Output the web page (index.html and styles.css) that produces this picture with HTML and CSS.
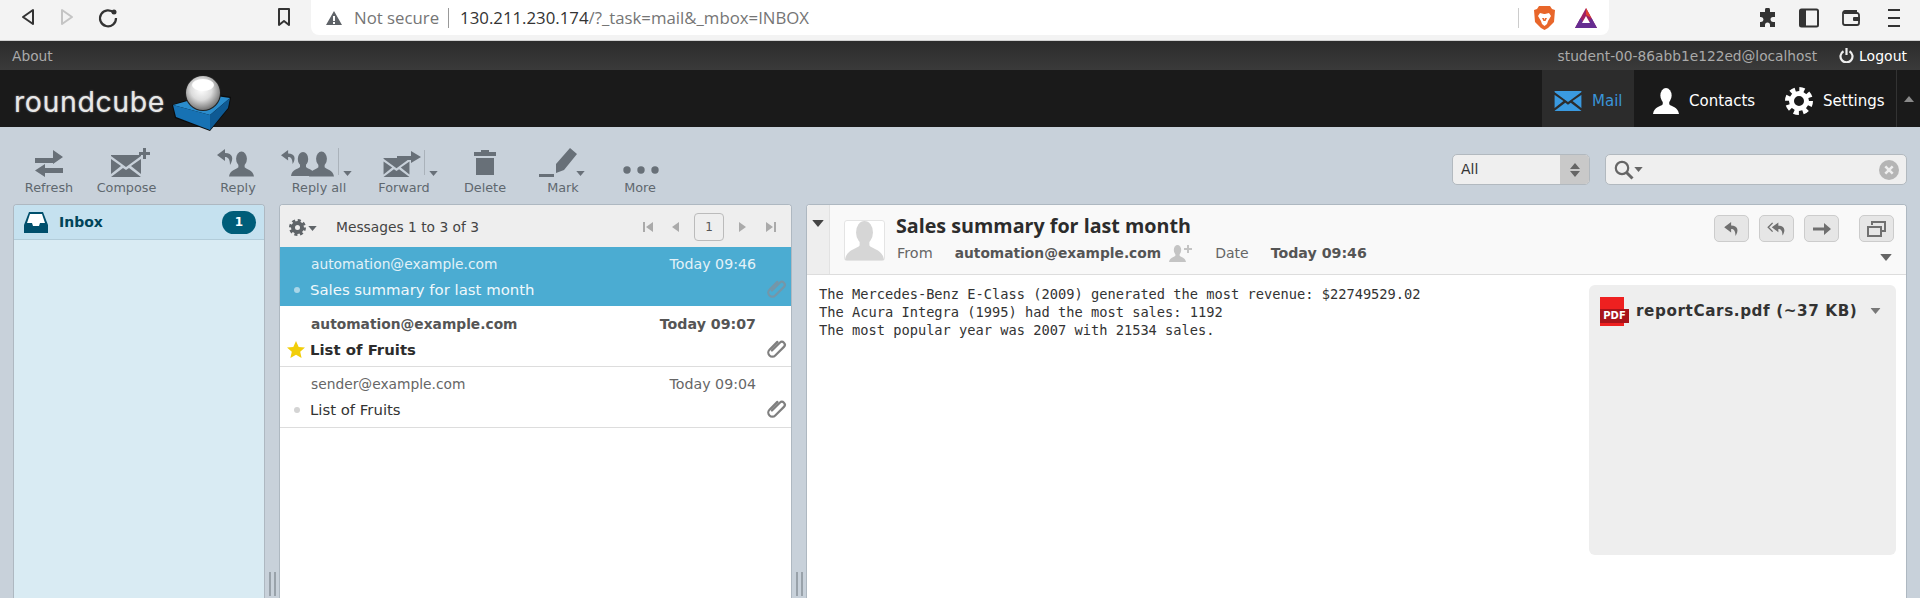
FILE: index.html
```html
<!DOCTYPE html>
<html lang="en">
<head>
<meta charset="utf-8">
<title>Roundcube Webmail :: Inbox</title>
<link rel="stylesheet" href="styles.css">
</head>
<body>
<svg class="defs" aria-hidden="true">
  <defs>
    <symbol id="person" viewBox="0 0 24 24"><ellipse cx="12" cy="7" rx="5.2" ry="7"/><path d="M9 12v3c-2 2.500-8 2-9 9h24c-1-7-7-6.500-9-9v-3z"/></symbol>
    <symbol id="env" viewBox="0 0 30 22"><path d="M0 1l15 11L30 1v-1H0zM0 4v15l10-8zM30 4v15L20 11zM0 22h30L18 13l-3 2-3-2z"/></symbol>
    <symbol id="replyarrow" viewBox="0 0 18 16"><path d="M8 0L0 6l8 6V8c3 0 5 2 5 8 4-6 3-12-5-12z"/></symbol>
    <symbol id="tri" viewBox="0 0 10 6"><path d="M0 0h10L5 6z"/></symbol>
    <symbol id="clip" viewBox="0 0 18 18"><path d="M5.500 4.500v9.500a3.500 3.500 0 0 0 7 0V3.500a2.500 2.500 0 0 0-5 0v9.500" transform="rotate(45 9 9)" fill="none" stroke-width="1.900" stroke-linecap="round"/></symbol>
  </defs>
</svg>
<div class="app">
  <div class="browser">
    <svg class="b-btn b-back" width="24" height="24" viewBox="0 0 24 24"><path d="M17 5v14L7 12z" fill="none" stroke="#333" stroke-width="2" stroke-linejoin="round"/></svg>
    <svg class="b-btn b-fwd" width="24" height="24" viewBox="0 0 24 24"><path d="M7 5v14l10-7z" fill="none" stroke="#c4c4c4" stroke-width="2" stroke-linejoin="round"/></svg>
    <svg class="b-btn b-reload" width="24" height="24" viewBox="0 0 24 24"><path d="M18 8a8 8 0 1 0 2 5" fill="none" stroke="#333" stroke-width="2.200"/><circle cx="18" cy="7" r="2.500" fill="#333"/></svg>
    <svg class="b-btn b-mark" width="24" height="24" viewBox="0 0 24 24"><path d="M7 4h10v16l-5-4-5 4z" fill="none" stroke="#333" stroke-width="2" stroke-linejoin="round"/></svg>
    <div class="urlbar">
      <svg class="warn" width="16" height="14" viewBox="0 0 16 14"><path d="M8 0l8 14H0zM7 5v5h2V5zM7 11v2h2v-2z" fill="#5f6368" fill-rule="evenodd"/></svg>
      <span class="notsec">Not secure</span>
      <span class="urlsep"></span>
      <span class="url"><span class="host">130.211.230.174</span>/?_task=mail&amp;_mbox=INBOX</span>
      <span class="urlsep urlsep-r"></span>
      <svg class="brave" width="21" height="24" viewBox="0 0 21 24"><path d="M5 0h11l2 3 3 1-1 12-6 6-3.500 2L7 22l-6-6L0 4l3-1z" fill="#e8662a"/><path d="M6 7l4 1h1l4-1 2 3-3 5-1 3-2.500 2L8 18l-1-3-3-5z" fill="#fff"/><path d="M8 12h2l.5 2 .5-2h2l-1.500 3h-2z" fill="#e8662a"/></svg>
      <svg class="bat" width="22" height="20" viewBox="0 0 22 20"><path d="M11 0l11 20H0z" fill="#9e1f63"/><path d="M11 0l5.500 10L11 7z" fill="#e0432f"/><path d="M0 20l5.500-10L8 14h6l2.500-4L22 20z" fill="#662d91"/><path d="M11 8l4 7H7z" fill="#fff"/></svg>
    </div>
    <svg class="b-ext b-puzzle" width="20" height="20" viewBox="0 0 20 20"><path d="M7 2a2.500 2.500 0 0 1 5 0v2h5v5h-2a2.500 2.500 0 0 0 0 5h2v5h-5v-2a2.500 2.500 0 0 0-5 0v2H2v-5h1a2.500 2.500 0 0 0 0-5H2V4h5z" fill="#333"/></svg>
    <svg class="b-ext b-side" width="20" height="20" viewBox="0 0 20 20"><rect x="1" y="1.500" width="18" height="17" rx="1.500" fill="none" stroke="#333" stroke-width="2"/><rect x="1" y="1.500" width="6" height="17" fill="#333"/></svg>
    <svg class="b-ext b-wallet" width="20" height="20" viewBox="0 0 20 20"><path d="M16 3H4a2 2 0 0 0-2 2v10a2 2 0 0 0 2 2h12a2 2 0 0 0 2-2V7a2 2 0 0 0-2-2H3" fill="none" stroke="#333" stroke-width="1.800"/><rect x="12" y="9" width="7" height="4" rx="1" fill="#333"/></svg>
    <svg class="b-ext b-menu" width="12" height="18" viewBox="0 0 12 18"><path d="M0 1h12M0 9h12M0 17h12" stroke="#333" stroke-width="2"/></svg>
  </div>

  <div class="topbar">
    <a class="about">About</a>
    <span class="user">student-00-86abb1e122ed@localhost</span>
    <svg class="power" width="15" height="15" viewBox="0 0 15 15"><path d="M4.500 3.200a6 6 0 1 0 6 0" fill="none" stroke="#eee" stroke-width="2.200"/><path d="M7.500 0v7" stroke="#eee" stroke-width="2.200"/></svg>
    <a class="logout">Logout</a>
  </div>

  <header class="header">
    <div class="logo-word">roundcube</div>
    <svg class="logo-cube" width="60" height="57" viewBox="0 0 60 57">
      <defs>
        <radialGradient id="ball" cx="45%" cy="40%" r="62%"><stop offset="0" stop-color="#fff"/><stop offset=".5" stop-color="#dcdcdc"/><stop offset="1" stop-color="#6f6f6f"/></radialGradient>
      </defs>
      <path d="M0 30L36 18l23 4-2 11-19 23L3 43z" fill="#0b0b0b"/>
      <path d="M1 30l36-10 21 3-20 17z" fill="#2a8ccc"/>
      <path d="M1 30l37 10v15L4 42z" fill="#1772b4"/>
      <path d="M38 40l20-17-2 10-18 22z" fill="#0e5a94"/>
      <circle cx="31" cy="18" r="18" fill="#222"/>
      <circle cx="31" cy="18" r="17" fill="url(#ball)"/>
      <ellipse cx="31" cy="10" rx="11" ry="6" fill="#fff"/>
    </svg>
    <nav class="tasks">
      <a class="task task-mail">
        <svg class="task-ico" width="28" height="20" viewBox="0 0 30 22"><use href="#env" fill="#3a9ae0"/></svg>
        <span>Mail</span>
      </a>
      <a class="task task-contacts">
        <svg class="task-ico" width="26" height="26" viewBox="0 0 24 24"><use href="#person" fill="#fff"/></svg>
        <span>Contacts</span>
      </a>
      <a class="task task-settings">
        <svg class="task-ico" width="28" height="28" viewBox="0 0 28 28"><circle cx="14" cy="14" r="11.500" fill="none" stroke="#fff" stroke-width="5" stroke-dasharray="5 4.030"/><circle cx="14" cy="14" r="7.500" fill="none" stroke="#fff" stroke-width="5"/></svg>
        <span>Settings</span>
      </a>
      <span class="collapse"><svg width="10" height="6" viewBox="0 0 10 6"><path d="M0 6h10L5 0z" fill="#8a8a8a"/></svg></span>
    </nav>
  </header>

  <div class="toolbar">
    <div class="tb-btn w-refresh">
      <svg class="tb-ico" viewBox="0 0 78 30"><path d="M25 16v-5h18V3l10 7-10 7v-1zM53 21v5H35v4l-10-6.500L35 17v4z" fill="#687078"/></svg>
      <span>Refresh</span>
    </div>
    <div class="tb-btn w-compose">
      <svg class="tb-ico" viewBox="0 0 77 30"><use href="#env" x="23" y="8" width="30" height="22" fill="#687078"/><path d="M55 1h3v4h4v3h-4v4h-3V8h-4V5h4z" fill="#687078"/></svg>
      <span>Compose</span>
    </div>
    <div class="tb-gap"></div>
    <div class="tb-btn w-reply">
      <svg class="tb-ico" viewBox="0 0 76 30"><use href="#person" x="29" y="4" width="25" height="26" fill="#687078"/><use href="#replyarrow" x="17" y="2" width="18" height="16" fill="#687078"/></svg>
      <span>Reply</span>
    </div>
    <div class="tb-btn w-replyall">
      <svg class="tb-ico" viewBox="0 0 86 30"><use href="#person" x="15" y="4" width="24" height="26" fill="#687078"/><use href="#person" x="33" y="4" width="25" height="26" fill="#687078"/><use href="#replyarrow" x="5" y="2" width="16" height="16" fill="#687078"/><path d="M62.500 1v27" stroke="#aab2ba"/><use href="#tri" x="67" y="24" width="9" height="5" fill="#687078"/></svg>
      <span>Reply all</span>
    </div>
    <div class="tb-btn w-forward">
      <svg class="tb-ico" viewBox="0 0 84 30"><use href="#env" x="21" y="11" width="27" height="19" fill="#687078"/><path d="M35 9h14V4l10 6-10 6v-3H35z" fill="#687078"/><path d="M62.500 3v25" stroke="#aab2ba"/><use href="#tri" x="67" y="24" width="9" height="5" fill="#687078"/></svg>
      <span>Forward</span>
    </div>
    <div class="tb-btn w-delete">
      <svg class="tb-ico" viewBox="0 0 78 30"><path d="M35 3h8v2h7v4H28V5h7zM30 11h18v17H30z" fill="#687078"/></svg>
      <span>Delete</span>
    </div>
    <div class="tb-btn w-mark">
      <svg class="tb-ico" viewBox="0 0 78 30"><path d="M46 1l7 6-13 16-8 3 0-9zM15 27h15v3H15z" fill="#687078"/><use href="#tri" x="52" y="24" width="9" height="5" fill="#687078"/></svg>
      <span>Mark</span>
    </div>
    <div class="tb-btn w-more">
      <svg class="tb-ico" viewBox="0 0 76 30"><circle cx="25" cy="23" r="3.700" fill="#687078"/><circle cx="39" cy="23" r="3.700" fill="#687078"/><circle cx="53" cy="23" r="3.700" fill="#687078"/></svg>
      <span>More</span>
    </div>
    <div class="filter">
      <span class="select"><span class="select-val">All</span><span class="select-arrows"><svg width="10" height="14" viewBox="0 0 10 14"><path d="M0 6L5 0l5 6zM0 8h10l-5 6z" fill="#666"/></svg></span></span>
      <span class="search">
        <svg width="29" height="20" viewBox="0 0 29 20"><circle cx="8" cy="8" r="6.200" fill="none" stroke="#666" stroke-width="2.200"/><path d="M12.500 12.500l6 6" stroke="#666" stroke-width="3"/><use href="#tri" x="20" y="7" width="9" height="5" fill="#666"/></svg>
        <svg class="clear" width="20" height="20" viewBox="0 0 19 19"><circle cx="9.500" cy="9.500" r="9.500" fill="#b5b5b5"/><path d="M6 6l7 7M13 6l-7 7" stroke="#eee" stroke-width="2.400"/></svg>
      </span>
    </div>
  </div>

  <div class="panels">
    <aside class="panel folders">
      <div class="folder-row">
        <svg class="inbox-ico" width="24" height="21" viewBox="0 0 24 21"><path d="M5 0h14l5 13v8H0v-8z" fill="#004f6c"/><path d="M6 2h12l3 9h-5l-1 3H9l-1-3H3z" fill="#fff"/></svg>
        <span class="folder-name">Inbox</span>
        <span class="badge">1</span>
      </div>
    </aside>
    <div class="split"><span class="grip"></span></div>
    <section class="panel list">
      <div class="list-head">
        <svg class="list-gear" width="29" height="17" viewBox="0 0 29 17"><circle cx="8.500" cy="8.500" r="7" fill="none" stroke="#5f6468" stroke-width="3" stroke-dasharray="3 2.500"/><circle cx="8.500" cy="8.500" r="4.500" fill="none" stroke="#5f6468" stroke-width="4"/><use href="#tri" x="19" y="7" width="9" height="5" fill="#5f6468"/></svg>
        <span class="list-count">Messages 1 to 3 of 3</span>
        <span class="pager">
          <svg width="12" height="12" viewBox="0 0 12 12"><path d="M1 1h2v10H1zM11 1v10L4 6z" fill="#aaa"/></svg>
          <svg class="pg-prev" width="9" height="12" viewBox="0 0 9 12"><path d="M8 1v10L1 6z" fill="#aaa"/></svg>
          <span class="pg-num">1</span>
          <svg class="pg-next" width="9" height="12" viewBox="0 0 9 12"><path d="M1 1v10l7-5z" fill="#aaa"/></svg>
          <svg class="pg-last" width="12" height="12" viewBox="0 0 12 12"><path d="M1 1v10l7-5zM9 1h2v10H9z" fill="#aaa"/></svg>
        </span>
      </div>
      <div class="msg msg-sel">
        <div class="msg-l1"><span>automation@example.com</span><span class="msg-date">Today 09:46</span></div>
        <div class="msg-l2"><span class="dot"></span><span class="subj">Sales summary for last month</span>
          <svg class="clip clip-sel" width="21" height="21"><use href="#clip"/></svg></div>
      </div>
      <div class="msg msg-unread">
        <div class="msg-l1"><span>automation@example.com</span><span class="msg-date">Today 09:07</span></div>
        <div class="msg-l2"><svg class="star" width="18" height="18" viewBox="0 0 18 18"><path d="M9 0l2.700 6 6.300.6-4.800 4.200L14.600 17 9 13.700 3.400 17l1.400-6.200L0 6.600 6.300 6z" fill="#f2ce09"/></svg><span class="subj">List of Fruits</span>
          <svg class="clip" width="21" height="21"><use href="#clip"/></svg></div>
      </div>
      <div class="msg">
        <div class="msg-l1"><span>sender@example.com</span><span class="msg-date">Today 09:04</span></div>
        <div class="msg-l2"><span class="dot"></span><span class="subj">List of Fruits</span>
          <svg class="clip" width="21" height="21"><use href="#clip"/></svg></div>
      </div>
    </section>
    <div class="split"><span class="grip"></span></div>
    <main class="panel view">
      <div class="view-head">
        <div class="toggle"><svg width="12" height="7" viewBox="0 0 10 6"><use href="#tri" fill="#444"/></svg></div>
        <div class="avatar"><svg width="39" height="39" viewBox="0 0 24 24"><use href="#person" fill="#d6d6d6"/></svg></div>
        <div class="info">
          <h1 class="title">Sales summary for last month</h1>
          <div class="meta">
            <span class="m-label">From</span>
            <span class="m-from">automation@example.com</span>
            <svg class="addc" width="24" height="18" viewBox="0 0 24 18"><use href="#person" x="0" y="1" width="17" height="17" fill="#c4c4c4"/><path d="M18 1h2v3h3v2h-3v3h-2V6h-3V4h3z" fill="#c4c4c4"/></svg>
            <span class="m-label m-date">Date</span>
            <span class="m-from m-when">Today 09:46</span>
          </div>
        </div>
        <div class="actions">
          <div class="act-row">
            <span class="act"><svg width="18" height="14" viewBox="0 0 18 16"><use href="#replyarrow" fill="#707070"/></svg></span>
            <span class="act"><svg width="22" height="14" viewBox="0 0 22 16"><path d="M6 1L1 6l5 5M6 1" fill="none" stroke="#707070" stroke-width="1.600"/><use href="#replyarrow" x="5" width="17" height="16" fill="#707070"/></svg></span>
            <span class="act"><svg width="18" height="12" viewBox="0 0 18 12"><path d="M0 4.500h11V0l7 6-7 6V7.500H0z" fill="#707070"/></svg></span>
            <span class="act act-open"><svg width="19" height="16" viewBox="0 0 19 16"><path d="M5 4V1h13v9h-4M1 6h13v9H1z" fill="none" stroke="#707070" stroke-width="2"/></svg></span>
          </div>
          <svg class="act-drop" width="12" height="7" viewBox="0 0 10 6"><use href="#tri" fill="#666"/></svg>
        </div>
      </div>
      <div class="view-body">
        <pre class="text">The Mercedes-Benz E-Class (2009) generated the most revenue: $22749529.02
The Acura Integra (1995) had the most sales: 1192
The most popular year was 2007 with 21534 sales.</pre>
        <aside class="attach">
          <div class="att-row">
            <span class="pdf"><span class="pdf-tag">PDF</span></span>
            <span class="att-name">reportCars.pdf (~37 KB)</span>
            <svg class="att-drop" width="11" height="6" viewBox="0 0 10 6"><use href="#tri" fill="#777"/></svg>
          </div>
        </aside>
      </div>
    </main>
  </div>
</div>
</body>
</html>
```
FILE: styles.css
```css
* { box-sizing: border-box; }
html, body { margin: 0; padding: 0; }
body { font-family: "DejaVu Sans", Verdana, sans-serif; background: #c8d1da; overflow: hidden; }
.defs { display: none; }
a { cursor: pointer; }
.app { width: 1920px; height: 598px; display: flex; flex-direction: column; overflow: hidden; }

/* browser chrome */
.browser { height: 41px; flex: none; display: flex; align-items: flex-start; background: #f3f3f3; border-bottom: 1px solid #d0d0d0; }
.b-btn { flex: none; margin-top: 5px; }
.b-back { margin-left: 16px; }
.b-fwd { margin-left: 15px; }
.b-reload { margin-left: 17px; }
.b-mark { margin-left: 152px; }
.urlbar { width: 1298px; height: 35px; margin-left: 15px; display: flex; align-items: center; background: #fff; border-radius: 0 0 8px 8px; font-family: "Open Sans", sans-serif; font-size: 16.800px; color: #757575; }
.warn { margin-left: 15px; }
.notsec { margin-left: 12px; }
.urlsep { width: 1px; height: 20px; margin: 0 11px 0 9px; background: #999; }
.host { color: #333; }
.urlsep-r { margin: 0 0 0 auto; background: #ccc; }
.brave { margin-left: 15px; }
.bat { margin-left: 20px; margin-right: 12px; }
.b-ext { flex: none; margin-top: 8px; }
.b-puzzle { margin-left: 149px; }
.b-side { margin-left: 21px; }
.b-wallet { margin-left: 22px; }
.b-menu { margin-left: 27px; margin-top: 9px; }

/* top bar */
.topbar { height: 29px; flex: none; display: flex; align-items: center; padding: 0 13px 0 12px; background: linear-gradient(#2c2c2c, #3a3a3a); font-size: 13.750px; color: #aaa; }
.user { margin-left: auto; }
.power { margin-left: 22px; }
.logout { margin-left: 5px; font-size: 14px; color: #fff; }

/* header */
.header { height: 57px; flex: none; display: flex; position: relative; z-index: 2; background: #1a1a1a; }
.logo-word { margin: 12px 0 0 14px; width: 154px; font-family: "Inter", sans-serif; font-weight: 400; font-size: 28.500px; letter-spacing: .6px; line-height: 40px; color: #e8e8e8; text-shadow: 0 0 2px #999; }
.logo-cube { flex: none; margin: 5px 0 0 4px; overflow: visible; }
.tasks { margin-left: auto; display: flex; align-items: stretch; font-size: 15px; color: #fff; }
.task { display: flex; align-items: center; padding-top: 4px; }
.task-ico { flex: none; }
.task-mail { width: 92px; padding-left: 12px; background: #2c2c2c; color: #3a94d8; }
.task-mail span { margin-left: 10px; }
.task-contacts { width: 136px; padding-left: 19px; }
.task-contacts span { margin-left: 10px; }
.task-settings { width: 126px; padding-left: 15px; }
.task-settings span { margin-left: 10px; }
.collapse { width: 24px; display: flex; align-items: center; justify-content: center; border-left: 1px solid #333; }

/* toolbar */
.toolbar { height: 77px; flex: none; display: flex; padding: 20px 13px 0 10px; background: #c8d1da; }
.tb-btn { flex: none; font-size: 12.800px; line-height: 18px; color: #5f686f; text-align: center; }
.tb-btn span { display: block; margin-top: 2px; white-space: nowrap; }
.tb-ico { display: block; width: 100%; height: 30px; overflow: visible; }
.w-refresh, .w-delete, .w-mark { width: 78px; }
.w-compose { width: 77px; }
.w-reply, .w-more { width: 76px; }
.w-replyall { width: 86px; }
.w-forward { width: 84px; }
.tb-gap { width: 35px; flex: none; }
.filter { margin-left: auto; display: flex; gap: 15px; margin-top: 7px; height: 31px; }
.select { width: 138px; display: flex; border: 1px solid #b2b9bf; border-radius: 5px; background: #efefef; overflow: hidden; font-size: 14px; color: #333; }
.select-val { flex: 1; padding-left: 8px; line-height: 28px; }
.select-arrows { width: 29px; display: flex; align-items: center; justify-content: center; background: #c9c9c9; }
.search { width: 302px; display: flex; align-items: center; justify-content: space-between; padding: 0 7px 0 8px; border: 1px solid #b2b9bf; border-radius: 5px; background: #efefef; }

/* panels */
.panels { flex: 1; min-height: 0; display: flex; padding: 0 13px; }
.panel { border: 1px solid #aeb8c1; border-bottom: 0; border-radius: 4px 4px 0 0; overflow: hidden; }
.split { width: 14px; flex: none; display: flex; align-items: flex-end; justify-content: center; padding-bottom: 2px; }
.grip { width: 7px; height: 24px; border-left: 2px solid #99a2aa; border-right: 2px solid #99a2aa; }

.folders { width: 252px; flex: none; background: #d9ebf3; }
.folder-row { height: 35px; display: flex; align-items: center; padding: 0 8px 0 10px; background: #c5e1ef; border-bottom: 1px solid #b2ccd9; }
.folder-name { margin-left: 11px; font-size: 14px; font-weight: 700; color: #004458; }
.badge { margin-left: auto; width: 34px; height: 23px; border-radius: 12px; background: #005d79; color: #fff; font-size: 12px; font-weight: 700; line-height: 23px; text-align: center; }

.list { width: 513px; flex: none; background: #fff; }
.list-head { height: 42px; display: flex; align-items: center; padding: 2px 0 0 9px; background: #eee; }
.list-count { margin-left: 18px; font-size: 13.800px; color: #444; }
.pager { margin-left: auto; margin-right: 14px; display: flex; align-items: center; }
.pg-prev { margin-left: 17px; }
.pg-num { width: 30px; height: 28px; margin-left: 14px; border: 1px solid #bbb; border-radius: 4px; font-size: 12px; line-height: 26px; text-align: center; color: #555; }
.pg-next { margin-left: 14px; }
.pg-last { margin-left: 18px; }

.msg { height: 61px; padding-top: 7px; border-bottom: 1px solid #ddd; font-size: 13.800px; color: #666; }
.msg-l1 { display: flex; justify-content: space-between; height: 20px; padding: 0 35px 0 31px; line-height: 20px; }
.msg-date { font-size: 14.200px; }
.msg-l2 { display: flex; align-items: center; height: 32px; padding-right: 4px; font-size: 14.900px; color: #333; }
.dot { width: 6px; height: 6px; margin-left: 14px; margin-right: 10px; border-radius: 50%; background: #d4d4d4; }
.star { flex: none; margin: 0 5px 0 7px; }
.subj { white-space: nowrap; }
.clip { margin-left: auto; stroke: #808080; margin-top: -4px; }
.clip-sel { stroke: #7596a8; }
.msg-sel { height: 59px; background: #4bacd2; color: #e3f2f8; border-bottom: 0; }
.msg-sel .msg-l2 { color: #f0f8fb; }
.msg-sel .dot { background: #a9d6e8; }
.msg-unread { padding-top: 8px; font-weight: 700; color: #555; }
.msg-unread .msg-l2 { color: #2c2c2c; }

.view { flex: 1; min-width: 0; background: #fff; }
.view-head { height: 70px; display: flex; background: #f9f9f9; border-bottom: 1px solid #ddd; }
.toggle { width: 23px; flex: none; display: flex; justify-content: center; padding-top: 15px; background: #eee; border-right: 1px solid #e2e2e2; }
.avatar { width: 41px; height: 41px; margin: 15px 0 0 14px; flex: none; display: flex; align-items: flex-end; justify-content: center; background: #fff; border: 1px solid #e4e4e4; border-radius: 3px; }
.info { margin-left: 11px; padding-top: 8px; }
.title { margin: 0; font-family: "Open Sans", sans-serif; font-size: 19.700px; line-height: 26px; font-weight: 700; color: #2c2c2c; white-space: nowrap; }
.meta { display: flex; align-items: center; height: 28px; margin-left: 1px; white-space: nowrap; font-size: 13.800px; }
.m-label { color: #666; font-size: 14.400px; }
.m-from { margin-left: 22px; font-weight: 700; color: #555; }
.addc { margin-left: 8px; }
.m-date { margin-left: 22px; font-size: 14px; }
.m-when { margin-left: 22px; font-size: 14.200px; }
.actions { margin-left: auto; padding: 10px 12px 0 0; display: flex; flex-direction: column; align-items: flex-end; }
.act-row { display: flex; gap: 10px; }
.act { width: 35px; height: 27px; display: flex; align-items: center; justify-content: center; background: #e6e6e6; border: 1px solid #ccc; border-radius: 5px; }
.act-open { margin-left: 10px; }
.act-drop { margin: 12px 2px 0 0; }
.view-body { display: flex; }
.text { flex: 1; margin: 0; padding: 10px 0 0 12px; font-family: "DejaVu Sans Mono", monospace; font-size: 13.700px; line-height: 18px; color: #333; }
.attach { width: 307px; height: 270px; flex: none; margin: 10px 10px 0 0; padding: 11px 11px 0; background: #eee; border-radius: 6px; }
.att-row { display: flex; align-items: center; height: 30px; }
.pdf { width: 24px; height: 29px; flex: none; position: relative; background: #ee2020; }
.pdf-tag { position: absolute; left: 0; bottom: 3px; width: 29px; height: 14px; background: #a8131a; color: #fff; font-size: 10px; font-weight: 700; line-height: 14px; text-align: center; }
.att-name { margin-left: 12px; font-size: 15.200px; letter-spacing: .6px; font-weight: 700; color: #333; white-space: nowrap; }
.att-drop { margin-left: auto; margin-right: 4px; }
```
